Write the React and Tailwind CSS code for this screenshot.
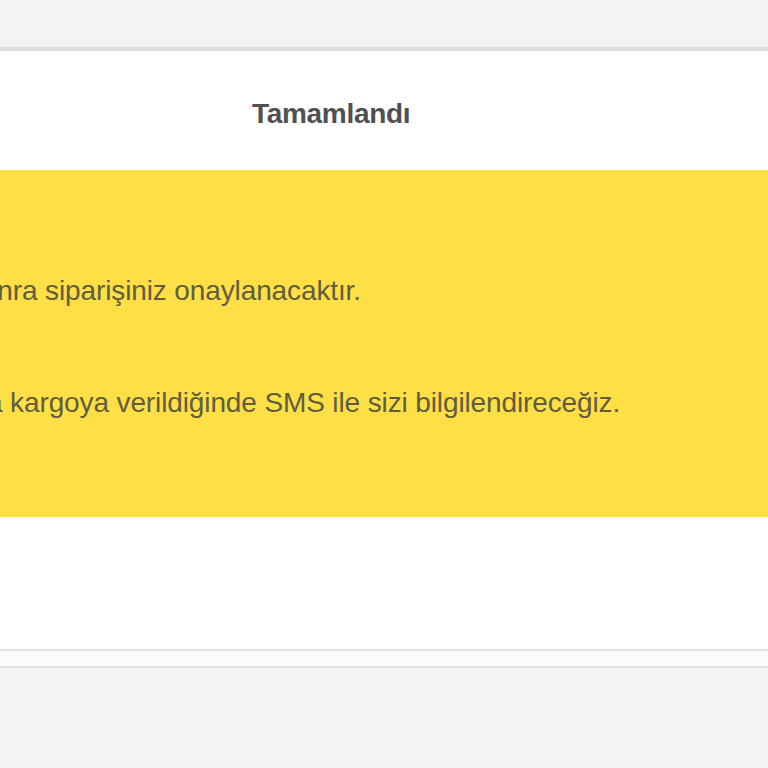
import React from "react";

const OrderStatus = () => {
  return (
    <div className="min-h-screen bg-[#f2f3f5] font-['Liberation_Sans',Arial,sans-serif] flex flex-col">
      {/* top spacer */}
      <div className="h-[47px]" />

      {/* card */}
      <div className="bg-white border-t-[4px] border-[#dcdddf]">
        {/* step header */}
        <div className="h-[119px] flex items-center pt-[6px] pl-[252px]">
          <span className="text-[28px] font-bold text-[#505050] tracking-[-0.3px]">Tamamlandı</span>
        </div>

        {/* info box */}
        <div className="bg-[#fedf46] h-[347px] overflow-hidden flex flex-col pt-[107px] gap-[84px] text-[28px] leading-[28px] tracking-[-0.12px] text-[#625d40]">
          <p className="whitespace-nowrap -ml-[32px]">sonra siparişiniz onaylanacaktır.</p>
          <p className="whitespace-nowrap -ml-[67px]">sonra kargoya verildiğinde SMS ile sizi bilgilendireceğiz.</p>
        </div>

        <div className="h-[132px]" />
      </div>

      {/* footer strip */}
      <div className="h-[19px] bg-[#fbfbfb] border-y-2 border-[#e1e1e1]" />
    </div>
  );
};

export default function App() {
  return <OrderStatus />;
}
